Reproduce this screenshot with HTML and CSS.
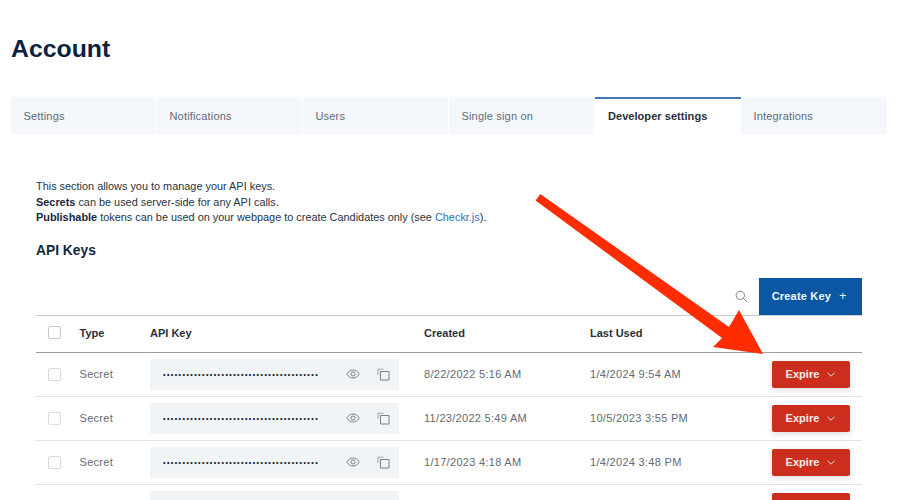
FILE: index.html
```html
<!DOCTYPE html>
<html lang="en">
<head>
<meta charset="utf-8">
<title>Account</title>
<link rel="stylesheet" href="styles.css">
</head>
<body>
<main class="page">
  <h1 class="title">Account</h1>
  <nav class="tabs">
    <a class="tab">Settings</a>
    <a class="tab">Notifications</a>
    <a class="tab">Users</a>
    <a class="tab">Single sign on</a>
    <a class="tab tab-active">Developer settings</a>
    <a class="tab">Integrations</a>
  </nav>
  <section class="content">
    <p class="intro">This section allows you to manage your API keys.<br>
      <b>Secrets</b> can be used server-side for any API calls.<br>
      <b>Publishable</b> tokens can be used on your webpage to create Candidates only (see <a class="link">Checkr.js</a>).</p>
    <h2 class="subtitle">API Keys</h2>
    <div class="toolbar">
      <svg class="search" viewBox="0 0 13 13" width="13" height="13"><circle cx="5.3" cy="5.3" r="4.2"/><path d="M8.4 8.4 12 12"/></svg>
      <button class="create">Create Key<span class="plus">+</span></button>
    </div>
    <div class="table">
      <div class="row head">
        <span class="box"></span><span>Type</span><span>API Key</span><span>Created</span><span>Last Used</span><span></span>
      </div>
      <div class="row">
        <span class="box"></span><span class="muted">Secret</span>
        <div class="key"><span class="dots">••••••••••••••••••••••••••••••••••••••••</span>
          <svg class="ico eye" viewBox="0 0 14 10" width="14" height="10"><path d="M.8 5C2.5 2.3 4.6 1 7 1s4.500 1.300 6.200 4C11.500 7.700 9.400 9 7 9S2.500 7.700.8 5Z"/><circle cx="7" cy="5" r="2"/></svg>
          <svg class="ico copy" viewBox="0 0 13 13" width="13" height="13"><path class="back" d="M6.500 1.200H1V7"/><path d="M3.500 3.500H12V12H3.500Z"/></svg>
        </div>
        <span class="muted">8/22/2022 5:16 AM</span><span class="muted">1/4/2024 9:54 AM</span>
        <button class="expire">Expire<svg class="chev" viewBox="0 0 8 5" width="8" height="5"><path d="M.6.800 4 4.200 7.400.8"/></svg></button>
      </div>
      <div class="row">
        <span class="box"></span><span class="muted">Secret</span>
        <div class="key"><span class="dots">••••••••••••••••••••••••••••••••••••••••</span>
          <svg class="ico eye" viewBox="0 0 14 10" width="14" height="10"><path d="M.8 5C2.5 2.3 4.6 1 7 1s4.500 1.300 6.200 4C11.500 7.700 9.400 9 7 9S2.500 7.700.8 5Z"/><circle cx="7" cy="5" r="2"/></svg>
          <svg class="ico copy" viewBox="0 0 13 13" width="13" height="13"><path class="back" d="M6.500 1.200H1V7"/><path d="M3.500 3.500H12V12H3.500Z"/></svg>
        </div>
        <span class="muted">11/23/2022 5:49 AM</span><span class="muted">10/5/2023 3:55 PM</span>
        <button class="expire">Expire<svg class="chev" viewBox="0 0 8 5" width="8" height="5"><path d="M.6.800 4 4.200 7.400.8"/></svg></button>
      </div>
      <div class="row">
        <span class="box"></span><span class="muted">Secret</span>
        <div class="key"><span class="dots">••••••••••••••••••••••••••••••••••••••••</span>
          <svg class="ico eye" viewBox="0 0 14 10" width="14" height="10"><path d="M.8 5C2.5 2.3 4.6 1 7 1s4.500 1.300 6.200 4C11.500 7.700 9.400 9 7 9S2.500 7.700.8 5Z"/><circle cx="7" cy="5" r="2"/></svg>
          <svg class="ico copy" viewBox="0 0 13 13" width="13" height="13"><path class="back" d="M6.500 1.200H1V7"/><path d="M3.500 3.500H12V12H3.500Z"/></svg>
        </div>
        <span class="muted">1/17/2023 4:18 AM</span><span class="muted">1/4/2024 3:48 PM</span>
        <button class="expire">Expire<svg class="chev" viewBox="0 0 8 5" width="8" height="5"><path d="M.6.800 4 4.200 7.400.8"/></svg></button>
      </div>
      <div class="row">
        <span></span><span></span>
        <div class="key"></div>
        <span></span><span></span>
        <button class="expire"></button>
      </div>
    </div>
  </section>
  <svg class="arrow" viewBox="0 0 900 500" width="900" height="500"><path d="M540.300 194 535.600 200.500 722 338 713 347 763 354 739 310 729 327Z"/></svg>
</main>
</body>
</html>
```

FILE: styles.css
```css
* { box-sizing: border-box; }
html, body { margin: 0; height: 100%; overflow: hidden; background: #fff; }
body { font-family: "Liberation Sans", Arial, sans-serif; font-size: 11px; color: #1f2a37; }
.page { position: relative; width: 900px; height: 500px; overflow: hidden; padding-top: 34px; }
.title { margin: 0 0 33px 11px; font-size: 24.800px; line-height: 30px; font-weight: 700; color: #0a2240; }
.tabs { display: flex; margin-left: 11px; width: 876px; height: 37px; }
.tab { flex: 0 0 146px; display: flex; align-items: center; padding-left: 12.500px; background: #f4f7fb; border-right: 1px solid #fff; color: #5f6b76; letter-spacing: .17px; }
.tab:last-child { border-right: 0; }
.tab-active { background: #fff; border-top: 2px solid #3f78b5; border-right: 0; padding-left: 13px; padding-bottom: 1px; font-weight: 700; color: #2a3038; letter-spacing: .05px; }
.content { padding: 45px 38px 0 36px; }
.intro { margin: 0; line-height: 15.500px; color: #27343f; font-size: 10.900px; }
.intro b { color: #15273c; }
.link { color: #2f6fb7; }
.subtitle { margin: 16px 0 0; font-size: 13.800px; line-height: 18px; font-weight: 700; color: #13263d; }
.toolbar { display: flex; justify-content: flex-end; align-items: center; gap: 11px; margin-top: 18px; height: 37px; }
.search { fill: none; stroke: #7b8187; stroke-width: 1; }
.create { height: 37px; width: 103px; border: 0; background: #0b57a4; color: #f2f6fb; font: 700 11px "Liberation Sans", Arial, sans-serif; letter-spacing: .2px; padding: 0 3px 0 0; }
.plus { margin-left: 8px; font-weight: 400; font-size: 12px; }
.table { border-top: 1px solid #c9cccf; }
.row { display: grid; grid-template-columns: 43.500px 70.500px 274px 166px 181.500px 1fr; align-items: center; height: 44px; border-bottom: 1px solid #dfe3e8; }
.head { height: 37px; padding-bottom: 2px; border-bottom-color: #9a9da0; font-weight: 700; color: #2a3038; }
.muted { color: #626b73; letter-spacing: .3px; }
.box { width: 13px; height: 13px; margin-left: 12px; border: 1px solid #d9dcdf; border-radius: 2px; background: #fff; }
.head .box { border-color: #c4c8cc; }
.key { display: flex; align-items: center; width: 249px; height: 31px; padding-left: 13px; background: #f1f4f7; color: #11161c; }
.dots { width: 183px; font-size: 7px; font-weight: 700; letter-spacing: 1.450px; white-space: nowrap; overflow: hidden; }
.ico { fill: none; stroke: #7b8187; stroke-width: 1; }
.copy { margin-left: 17px; }
.back { stroke: #9a9fa4; }
.expire { display: flex; align-items: center; justify-content: center; gap: 8px; width: 78px; height: 27px; border: 0; border-radius: 2px; background: #cc2e1e; color: #fbeeec; font: 700 11px "Liberation Sans", Arial, sans-serif; letter-spacing: .05px; padding: 0; box-shadow: 0 2px 6px rgba(0,0,0,.14); }
.chev { fill: none; stroke: #f7dcd8; stroke-width: 1; }
.arrow { position: absolute; left: 0; top: 0; fill: #ff2c00; pointer-events: none; }
```
